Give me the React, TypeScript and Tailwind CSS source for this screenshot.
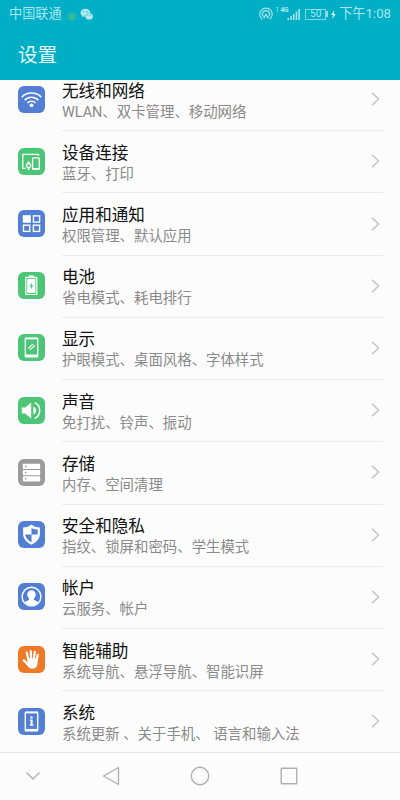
import type { ReactNode } from "react";

type Row = {
  title: string;
  desc: string;
  color: string;
  icon: ReactNode;
};

const BLUE = "bg-[#527fd3]";
const GREEN = "bg-[#4cc676]";

// All tile icons are drawn on a 27x27 grid, the size of the tile
const rows: Row[] = [
  {
    title: "无线和网络",
    desc: "WLAN、双卡管理、移动网络",
    color: BLUE,
    icon: (
      <g fill="none" stroke="#fff" strokeWidth="1.5">
        <path d="M3.8 11.1a13.8 13.8 0 0 1 19.4 0" />
        <path d="M6.6 14.2a9.7 9.7 0 0 1 13.8 0" />
        <path d="M9.4 17a5.8 5.8 0 0 1 8.2 0" />
        <circle cx="13.5" cy="19.3" r="1.9" fill="#fff" stroke="none" />
      </g>
    ),
  },
  {
    title: "设备连接",
    desc: "蓝牙、打印",
    color: GREEN,
    icon: (
      <g fill="none" stroke="#fff" strokeWidth="1.3">
        <path d="M7.5 20.4H4.8V6.3h15.7v1.6" />
        <rect x="14.6" y="9.8" width="6.7" height="11" rx="0.8" />
        <path d="M14 20.8h8" strokeWidth="1.6" />
        <circle cx="10.6" cy="17.6" r="2.1" />
        <path d="M10.6 13.4v2M10.6 19.8v2.2" strokeWidth="1.8" />
      </g>
    ),
  },
  {
    title: "应用和通知",
    desc: "权限管理、默认应用",
    color: BLUE,
    icon: (
      <g fill="none" stroke="#fff" strokeWidth="1.4">
        <rect x="4.8" y="5.2" width="8" height="7.6" fill="#fff" stroke="none" />
        <rect x="15.4" y="5.9" width="6.2" height="6.2" />
        <rect x="5.5" y="15.2" width="6.2" height="6.2" />
        <rect x="15.4" y="15.2" width="6.2" height="6.2" />
      </g>
    ),
  },
  {
    title: "电池",
    desc: "省电模式、耗电排行",
    color: GREEN,
    icon: (
      <g>
        <path d="M10.8 3.4h5v1.4h-5z" fill="#fff" />
        <rect x="7.8" y="5.3" width="11" height="17.2" rx="0.5" fill="none" stroke="#fff" strokeWidth="1.2" />
        <rect x="9.2" y="6.8" width="8.2" height="14.2" fill="#fff" />
        <path d="M13.8 10.4l-2.4 4h1.7l-.4 3.4 2.6-4.2h-1.7z" fill="#4cc676" />
      </g>
    ),
  },
  {
    title: "显示",
    desc: "护眼模式、桌面风格、字体样式",
    color: GREEN,
    icon: (
      <g fill="none" stroke="#fff" strokeWidth="1.3">
        <rect x="7.3" y="4.2" width="12.4" height="18.6" rx="0.6" />
        <path d="M7 4.6h13" strokeWidth="1.6" />
        <path d="M7 21.8h13" strokeWidth="2.6" />
        <path d="M10.3 14.4l4.8-4.4M12 15.9l4.8-4.4" strokeWidth="1.2" />
      </g>
    ),
  },
  {
    title: "声音",
    desc: "免打扰、铃声、振动",
    color: GREEN,
    icon: (
      <g fill="none" stroke="#fff" strokeWidth="1.5">
        <path d="M3.8 10.6h3.4l6-5.2v16.2l-6-5.2H3.8z" fill="#fff" stroke="none" />
        <path d="M15.4 9.4c3.6 1.4 3.6 6.8 0 8.2z" fill="#fff" stroke="none" />
        <path d="M16.6 5.8c6.8 2.4 6.8 13 0 15.4" />
      </g>
    ),
  },
  {
    title: "存储",
    desc: "内存、空间清理",
    color: "bg-[#9b9b9b]",
    icon: (
      <g fill="#fff">
        <rect x="4.8" y="4.8" width="17.4" height="5.2" rx="0.8" />
        <rect x="4.8" y="11" width="17.4" height="5.2" rx="0.8" />
        <rect x="4.8" y="17.2" width="17.4" height="5.2" rx="0.8" />
        <g fill="#8c8c8c">
          <circle cx="7.8" cy="7.4" r="0.8" />
          <circle cx="7.8" cy="13.6" r="0.8" />
          <circle cx="7.8" cy="19.8" r="0.8" />
        </g>
      </g>
    ),
  },
  {
    title: "安全和隐私",
    desc: "指纹、锁屏和密码、学生模式",
    color: BLUE,
    icon: (
      <g>
        <path
          d="M13.5 3.4c2.4 1.9 5 2.8 8.4 3v6.2c0 5.2-3.4 9-8.4 11.2-5-2.2-8.4-6-8.4-11.2V6.4c3.4-.2 6-1.1 8.4-3z"
          fill="#fff"
        />
        <path d="M13.5 7v6.6h6.2V8.6c-2.3-.1-4.3-.6-6.2-1.6z" fill="#527fd3" />
        <path d="M13.5 13.6v7.8c-3.6-1.8-5.9-4.4-6.2-7.8z" fill="#527fd3" />
      </g>
    ),
  },
  {
    title: "帐户",
    desc: "云服务、帐户",
    color: BLUE,
    icon: (
      <g>
        <circle cx="13.5" cy="13.7" r="9.4" fill="none" stroke="#fff" strokeWidth="1.4" />
        <path
          d="M13.5 7.2c-2.5 0-4.2 1.7-4.2 4.2 0 1.7.7 3 1.8 3.9.3 1.5-.4 2-1.8 2.5-1.1.4-1.9.8-2.3 1.7 3.4 4.1 9.6 4.1 13 0-.4-.9-1.2-1.3-2.3-1.7-1.4-.5-2.1-1-1.8-2.5 1.1-.9 1.8-2.2 1.8-3.9 0-2.5-1.7-4.2-4.2-4.2z"
          fill="#fff"
        />
      </g>
    ),
  },
  {
    title: "智能辅助",
    desc: "系统导航、悬浮导航、智能识屏",
    color: "bg-[#ee7a28]",
    icon: (
      <g fill="none" stroke="#fff" strokeWidth="2.2" strokeLinecap="round">
        <path d="M10.6 14L8.7 6.7M13.2 13.5l-.5-8.3M15.9 13.5l.9-7.7M18.6 14.5l1.2-5.7" />
        <path d="M10 18.4l-4.2-4" strokeWidth="2.3" />
        <path
          d="M9.5 12.6h10.2l-.2 5c-.2 3.2-1.7 5.1-4.8 5.1-2.5 0-3.8-.9-5.2-2.7l-1.6-2 1.7-1z"
          fill="#fff"
          stroke="none"
        />
      </g>
    ),
  },
  {
    title: "系统",
    desc: "系统更新 、关于手机、 语言和输入法",
    color: BLUE,
    icon: (
      <g>
        <rect x="7.3" y="4.2" width="12.4" height="18.6" rx="0.6" fill="none" stroke="#fff" strokeWidth="1.4" />
        <path d="M7 4.6h13" stroke="#fff" strokeWidth="1.6" />
        <path d="M7 22h13" stroke="#fff" strokeWidth="2.2" />
        <path d="M12.4 8.6h2.2v1.9h-2.2zM11.8 11.6h2.8v5h.9v1.2h-3.7v-1.2h.8v-3.8h-.8z" fill="#fff" />
      </g>
    ),
  },
];

function StatusBar() {
  return (
    <div className="flex h-7 items-center px-[9px] text-[#a9e6ee]">
      <span className="text-[13.2px] leading-7">中国联通</span>
      <svg className="ml-[6px] mt-[5px]" width="8" height="7" viewBox="0 0 8 7">
        <rect x="0.7" y="0.7" width="6.6" height="5.6" rx="1" fill="#1fb3a4" stroke="#46bf87" />
        <path d="M2 4.5h4" stroke="#46bf87" />
      </svg>
      <svg className="ml-[4px]" width="14" height="13" viewBox="0 0 14 13">
        <path
          d="M5.4.8C2.7.8.6 2.5.6 4.7c0 1.2.7 2.3 1.7 3l-.4 1.6 1.7-.9c.6.2 1.2.2 1.8.2 2.7 0 4.9-1.7 4.9-3.9S8.1.8 5.4.8z"
          fill="#b4e9f1"
        />
        <path
          d="M9.2 5c-2.4 0-4.2 1.5-4.2 3.4s1.8 3.4 4.2 3.4c.5 0 1-.1 1.5-.2l1.4.8-.4-1.4c.9-.6 1.5-1.5 1.5-2.6C13.2 6.5 11.5 5 9.2 5z"
          fill="#b4e9f1"
          stroke="#00aec6"
          strokeWidth="0.5"
        />
        <g fill="#00aec6">
          <circle cx="3.8" cy="3.7" r="0.6" />
          <circle cx="7" cy="3.7" r="0.6" />
          <circle cx="7.9" cy="7.5" r="0.5" />
          <circle cx="10.6" cy="7.5" r="0.5" />
        </g>
      </svg>

      {/* hotspot */}
      <svg className="ml-auto" width="14" height="14" viewBox="0 0 14 14" fill="none" stroke="#a9e6ee" strokeWidth="1.2">
        <path d="M3.2 12.2a6.2 6.2 0 1 1 7.6 0" />
        <path d="M4.5 9.9a3.6 3.6 0 1 1 5 0" />
        <path d="M7 7l-2.2 4.5M7 7l2.2 4.5" />
      </svg>
      <span className="mb-[8px] ml-[2px] w-[4px] text-[7px] leading-none">1</span>
      <div className="mb-[8px] ml-px w-[8px] text-[7px] font-bold leading-none tracking-tighter">4G</div>
      <svg className="-ml-px" width="14" height="13" viewBox="0 0 14 13" fill="#a9e6ee">
        <rect x="0.5" y="10" width="1.6" height="2" />
        <rect x="3.2" y="8.2" width="1.6" height="3.8" />
        <rect x="5.9" y="6" width="1.6" height="6" />
        <rect x="8.6" y="3.5" width="1.6" height="8.5" />
        <rect x="11.3" y="1" width="1.6" height="11" />
      </svg>
      <div className="ml-[4px] flex h-[11px] w-[21px] items-center justify-center border border-[#7fd6e3] text-[10px] leading-none">
        50
      </div>
      <div className="h-[6px] w-[2px] bg-[#8fdbe6]" />
      <svg className="ml-[3px]" width="5" height="9" viewBox="0 0 5 9" fill="#c9f0f5">
        <path d="M3.2 0L.2 5h1.6l-.4 4L4.8 3.9H3z" />
      </svg>
      <span className="ml-[3px] text-[13.2px] leading-7">下午1:08</span>
    </div>
  );
}

function SettingRow({ title, desc, color, icon }: Row) {
  return (
    <li className="group flex h-[62.23px] shrink-0 items-center pl-[18px]">
      <div className={`mb-[2px] h-[27px] w-[27px] shrink-0 rounded-[6px] ${color}`}>
        <svg width="27" height="27" viewBox="0 0 27 27">
          {icon}
        </svg>
      </div>
      <div className="ml-[17px] mr-[17px] flex h-full flex-1 items-center border-b border-[#ebebeb] group-last:border-transparent">
        <div className="min-w-0 flex-1 whitespace-nowrap pt-[4px]">
          <p className="text-[16.6px] leading-[22px] text-[#111]">{title}</p>
          <p className="text-[14.42px] leading-[20px] text-[#8a8a8a]">{desc}</p>
        </div>
        <svg className="mb-px mr-[3px]" width="9" height="14" viewBox="0 0 9 14" fill="none" stroke="#c2c2c2" strokeWidth="1.4">
          <path d="M1 .8L7.6 7 1 13.2" />
        </svg>
      </div>
    </li>
  );
}

function NavBar() {
  return (
    <nav className="grid h-[48px] shrink-0 grid-cols-[66px_89px_90px_88px_67px] items-center justify-items-center border-t border-[#e6e6e6]">
      <svg className="mb-[2px]" width="16" height="10" viewBox="0 0 16 10" fill="none" stroke="#b0b0b0" strokeWidth="1.4">
        <path d="M1.5 1.5L8 8l6.5-6.5" />
      </svg>
      <svg className="mb-px" width="18" height="20" viewBox="0 0 18 20" fill="none" stroke="#b0b0b0" strokeWidth="1.4" strokeLinejoin="round">
        <path d="M1.5 10L16.5 1.5v17z" />
      </svg>
      <svg className="mb-px" width="20" height="20" viewBox="0 0 20 20" fill="none" stroke="#b0b0b0" strokeWidth="1.4">
        <circle cx="10" cy="10" r="8.7" />
      </svg>
      <svg className="mb-px" width="18" height="18" viewBox="0 0 18 18" fill="none" stroke="#b0b0b0" strokeWidth="1.4">
        <rect x="1.2" y="1.2" width="15.6" height="15.6" rx="0.5" />
      </svg>
    </nav>
  );
}

export default function App() {
  return (
    <div className="flex h-[800px] w-[400px] flex-col overflow-hidden bg-[#fcfcfc] font-['Roboto','Noto_Sans_CJK_SC',sans-serif]">
      <header className="h-[80px] shrink-0 bg-[#00aec6]">
        <StatusBar />
        <h1 className="pl-[18px] pt-px text-[19.6px] leading-[54px] text-[#e4f8fb]">设置</h1>
      </header>
      {/* the list is scrolled a little, so the first row slides under the header */}
      <main className="min-h-0 flex-1 overflow-hidden">
        <ul className="-mt-[11px] flex flex-col">
          {rows.map((row) => (
            <SettingRow key={row.title} {...row} />
          ))}
        </ul>
      </main>
      <NavBar />
    </div>
  );
}
